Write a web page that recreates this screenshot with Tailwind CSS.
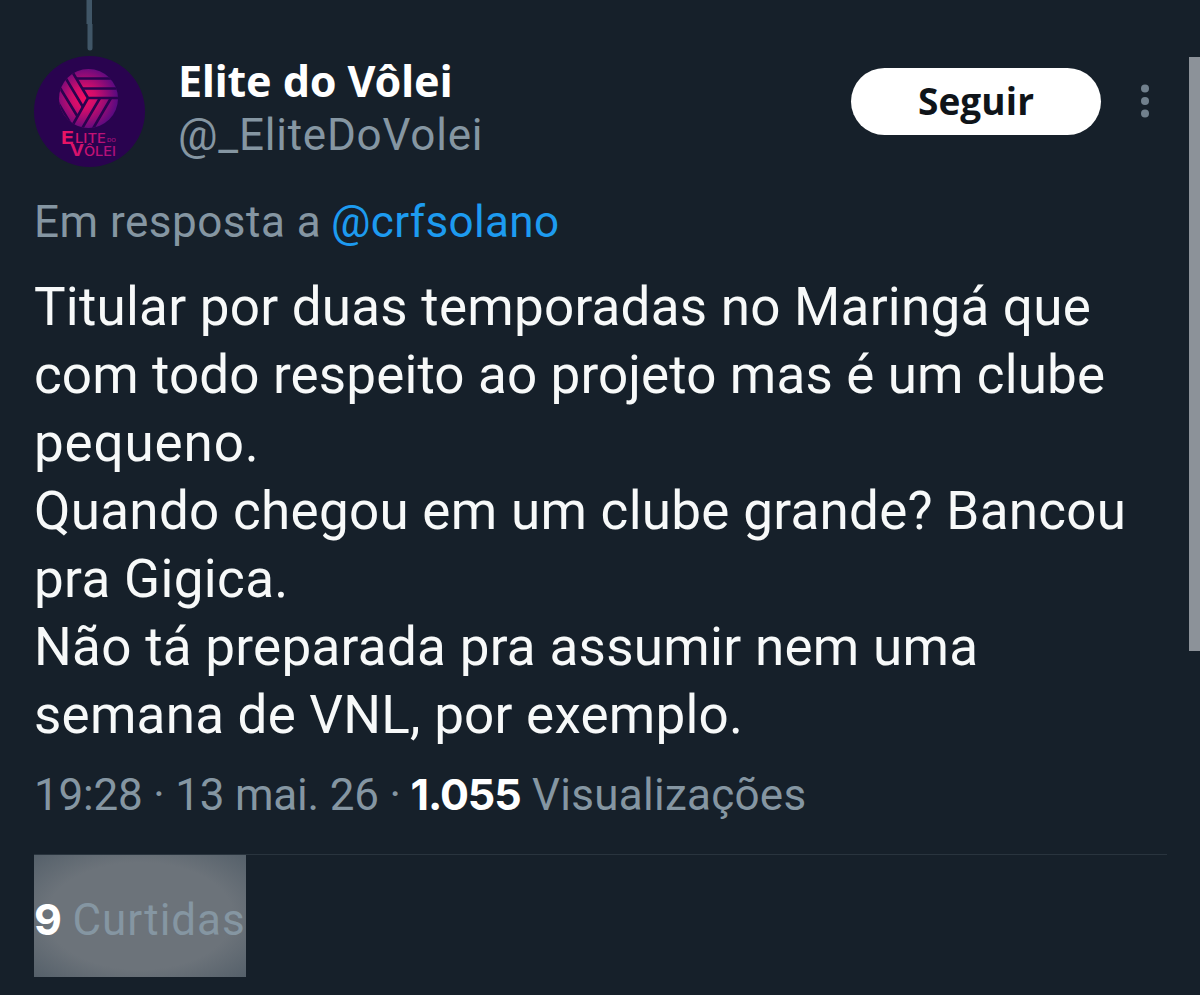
<!DOCTYPE html>
<html lang="pt-BR">
<head>
<meta charset="utf-8">
<title>Elite do Vôlei</title>
<script src="https://cdn.jsdelivr.net/npm/@tailwindcss/browser@4"></script>
</head>
<body class="relative h-[995px] w-[1200px] overflow-hidden bg-[#16202a] font-['Roboto',sans-serif] text-[44px] whitespace-nowrap text-[#8596a2]">
<main class="flex flex-col pr-[33px] pl-[34px]">
  <div class="flex h-[53px] w-[111px] shrink-0 justify-center">
    <svg class="h-[53px] w-[10px]" viewBox="0 0 10 53" fill="#405667"><path d="M1.500 0h5.500v24h.5v24a2.500 2.500 0 0 1-5 0V24h-1z"/></svg>
  </div>
  <header class="flex h-[141px] items-start">
    <svg class="mt-[3px] h-[111px] w-[111px] shrink-0" viewBox="0 0 111 111">
      <defs>
        <radialGradient id="ball" gradientUnits="userSpaceOnUse" cx="50" cy="42" r="33">
          <stop offset="0" stop-color="#f50c62"/><stop offset=".35" stop-color="#d00d6b"/><stop offset="1" stop-color="#5c0a80"/>
        </radialGradient>
        <linearGradient id="word" gradientUnits="userSpaceOnUse" x1="27" y1="0" x2="84" y2="0">
          <stop offset="0" stop-color="#ee1462"/><stop offset=".35" stop-color="#d01270"/><stop offset="1" stop-color="#a5107f"/>
        </linearGradient>
        <clipPath id="round"><circle cx="54.500" cy="42.500" r="29.500"/></clipPath>
      </defs>
      <circle cx="55.500" cy="55.500" r="55.500" fill="#29034f"/>
      <circle cx="54.500" cy="42.500" r="29.500" fill="url(#ball)"/>
      <g clip-path="url(#round)" fill="none" stroke="#29034f" stroke-width="2.600">
        <path d="M54 42H88M54 42L37 72M54 42L36 12"/>
        <path d="M48 32.500H88M42 22.500H88"/>
        <path d="M49 51L25 11M43.500 60.500L17 17M38 70L14 30"/>
        <path d="M66 42L46 76M77 42L57 76"/>
      </g>
      <g fill="url(#word)" font-family="Inter, sans-serif" font-weight="500">
        <text x="27" y="88" font-size="18" font-weight="700" textLength="13" lengthAdjust="spacingAndGlyphs">E</text>
        <text x="41" y="87" font-size="12.500" textLength="31" lengthAdjust="spacingAndGlyphs">LITE</text>
        <text x="73" y="86" font-size="5" textLength="9" lengthAdjust="spacingAndGlyphs">DO</text>
        <text x="36" y="100" font-size="16" font-weight="700" textLength="14" lengthAdjust="spacingAndGlyphs">V</text>
        <text x="50" y="100" font-size="12.500" textLength="32" lengthAdjust="spacingAndGlyphs">ÔLEI</text>
      </g>
    </svg>
    <div class="ml-[33px] flex flex-col">
      <span class="h-[55px] pt-px font-['Noto_Sans',sans-serif] text-[43px] leading-[54px] font-bold tracking-[-0.1px] text-white">Elite do Vôlei</span>
      <span class="leading-[54px] tracking-[0.78px]">@_EliteDoVolei</span>
    </div>
    <button class="mt-[14.500px] ml-auto flex h-[67px] w-[250px] items-center justify-center rounded-full bg-white pb-0.5 font-['Open_Sans',sans-serif] text-[37px] leading-none font-bold tracking-[0.1px] text-[#0f1419]">Seguir</button>
    <svg class="mt-[28px] mr-[16px] ml-[38px] h-[40px] w-[12px]" viewBox="0 0 12 40" fill="#71808d"><circle cx="6" cy="7.500" r="4"/><circle cx="6" cy="20" r="4"/><circle cx="6" cy="32.500" r="4"/></svg>
  </header>
  <p class="flex h-[79px] leading-[57px]">
    <span class="w-[297px] tracking-[0.5px]">Em resposta a</span><span class="tracking-[0.35px] text-[#1d9bf0]">@crfsolano</span>
  </p>
  <div class="flex h-[494px] flex-col text-[53px] leading-[68px] text-[#f7f9f9]">
    <span class="tracking-[0.23px]">Titular por duas temporadas no Maringá que</span>
    <span class="tracking-[0.12px]">com todo respeito ao projeto mas é um clube</span>
    <span class="tracking-[0.85px]">pequeno.</span>
    <span class="tracking-[0.28px]">Quando chegou em um clube grande? Bancou</span>
    <span class="tracking-[0.35px]">pra Gigica.</span>
    <span class="tracking-[0.28px]">Não tá preparada pra assumir nem uma</span>
    <span class="tracking-[0.22px]">semana de VNL, por exemplo.</span>
  </div>
  <p class="flex h-[87px] items-baseline leading-[56px]">
    <span class="w-[376.500px] tracking-[-0.21px]">19:28 · 13 mai. 26 ·</span><span class="w-[121.500px] font-['Inter',sans-serif] text-[43px] leading-none font-bold tracking-[-1.1px] text-white">1.055</span><span class="tracking-[0.27px]">Visualizações</span>
  </p>
  <div class="flex border-t border-[#29343e]">
    <div class="flex h-[122px] w-[212px] items-baseline bg-[#6b737a] bg-[radial-gradient(farthest-corner_at_center,#6c737a_62%,#55606a_100%)] pt-[37px] leading-[56px]">
      <span class="w-[38.500px] font-['Inter',sans-serif] text-[43px] leading-none font-bold text-white">9</span><span class="tracking-[0.97px]">Curtidas</span>
    </div>
  </div>
</main>
<div class="absolute top-[57px] right-0 h-[594px] w-[11px] bg-[#8c9299]"></div>
</body>
</html>
